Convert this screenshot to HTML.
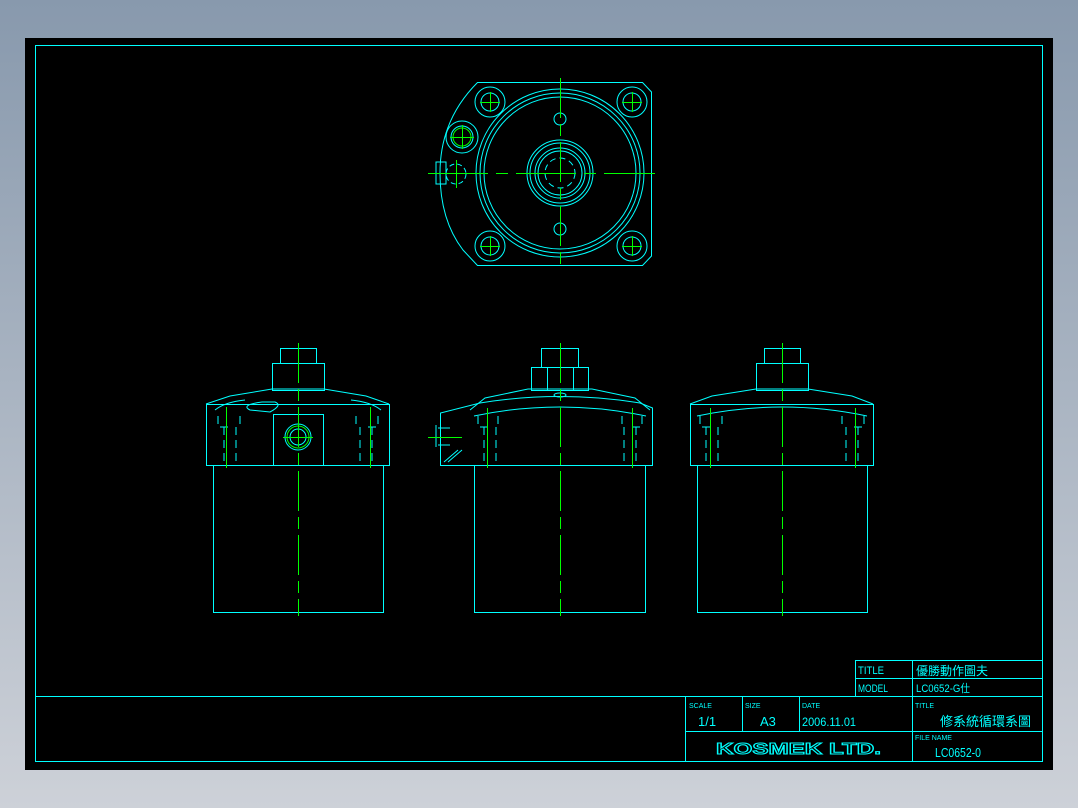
<!DOCTYPE html>
<html><head><meta charset="utf-8"><style>
html,body{margin:0;padding:0;width:1078px;height:808px;overflow:hidden;background:linear-gradient(#8899ad,#cdd1d8);}
svg{position:absolute;left:0;top:0}
text{font-family:"Liberation Sans","Noto Sans CJK TC",sans-serif;fill:#0ff}
</style></head><body>
<svg width="1078" height="808" viewBox="0 0 1078 808">
<rect x="25" y="38" width="1028" height="732" fill="#000"/>
<g fill="none" stroke="#0ff" stroke-width="1">
<rect x="35.5" y="45.5" width="1007" height="716"/>
<line x1="35" y1="696.5" x2="1043" y2="696.5"/>
<rect x="855.5" y="660.5" width="187" height="36"/>
<line x1="855" y1="678.5" x2="1043" y2="678.5"/>
<line x1="912.5" y1="660" x2="912.5" y2="696"/>
<line x1="685.5" y1="696" x2="685.5" y2="762"/>
<line x1="685" y1="731.5" x2="1043" y2="731.5"/>
<line x1="742.5" y1="696" x2="742.5" y2="731"/>
<line x1="799.5" y1="696" x2="799.5" y2="731"/>
<line x1="912.5" y1="696" x2="912.5" y2="762"/>

<!-- top view -->
<path d="M477.5 82.5 H642.5 L651.5 92 V256 L642.5 265.5 H477.5 L463 250 Q440 220 440 173 Q440 120 477.5 82.5Z"/>
<circle cx="560" cy="173" r="84"/><circle cx="560" cy="173" r="80"/><circle cx="560" cy="173" r="76"/>
<circle cx="560" cy="173" r="33"/><circle cx="560" cy="173" r="30"/><circle cx="560" cy="173" r="25"/><circle cx="560" cy="173" r="22"/><circle cx="560" cy="173" r="15" stroke-dasharray="6 4"/>
<circle cx="560" cy="119" r="6"/><circle cx="560" cy="229" r="6"/>
<circle cx="490" cy="102" r="15"/><circle cx="490" cy="102" r="9"/>
<circle cx="632" cy="102" r="15"/><circle cx="632" cy="102" r="9"/>
<circle cx="490" cy="246" r="15"/><circle cx="490" cy="246" r="9"/>
<circle cx="632" cy="246" r="15"/><circle cx="632" cy="246" r="9"/>
<circle cx="462" cy="137" r="16"/><circle cx="462" cy="137" r="11"/>
<rect x="436" y="162" width="10" height="22"/><circle cx="456" cy="174" r="10" stroke-dasharray="5 3"/>

<!-- left side view -->
<rect x="213.5" y="465.5" width="170" height="147"/>
<rect x="206.5" y="404.5" width="183" height="61"/>
<path d="M206 404 L230 396 L272 389 H324 L366 396 L389 404"/>
<rect x="272.5" y="363.5" width="52" height="27"/><rect x="280.5" y="348.5" width="36" height="15"/>
<line x1="273" y1="414.5" x2="323" y2="414.5"/>
<line x1="273.5" y1="414" x2="273.5" y2="465"/><line x1="323.5" y1="414" x2="323.5" y2="465"/>
<circle cx="298" cy="437" r="13"/><circle cx="298" cy="437" r="8"/>
<path d="M215 410 Q225 402 245 400 M381 410 Q371 402 351 400 M250 410 Q240 405 262 402 H275 Q283 405 270 412 Z"/>
<path d="M218 416 V427 H232 M240 416 V427 M378 416 V427 H364 M356 416 V427 M224 427 V465 M236 427 V465 M372 427 V465 M360 427 V465" stroke-dasharray="8 5"/>
<!-- middle view -->
<rect x="474.5" y="465.5" width="171" height="147"/>
<path d="M440.5 465.5 V413 L480 403 Q560 390 640 403 L652.5 408 V465.5 Z"/>
<path d="M470 410 L485 398 L528 389 H592 L635 398 L650 410"/>
<path d="M474 416 Q560 398 646 416"/>
<rect x="531.5" y="367.5" width="57" height="23"/><rect x="541.5" y="348.5" width="37" height="19"/>
<line x1="547.5" y1="367" x2="547.5" y2="390"/><line x1="573.5" y1="367" x2="573.5" y2="390"/>
<ellipse cx="560" cy="395" rx="6" ry="2"/>
<path d="M478 416 V427 H492 M498 416 V427 M642 416 V427 H628 M622 416 V427 M484 427 V465 M496 427 V465 M636 427 V465 M624 427 V465" stroke-dasharray="8 5"/>
<path d="M436 425 V447 M438 428 H450 M438 445 H450 M444 462 L458 450 M448 462 L462 450"/>
<!-- right view -->
<rect x="697.5" y="465.5" width="170" height="147"/>
<rect x="690.5" y="404.5" width="183" height="61"/>
<path d="M690 404 L712 396 L756 389 H808 L852 396 L873 404"/>
<path d="M697 416 Q782 398 867 416"/>
<rect x="756.5" y="363.5" width="52" height="27"/><rect x="764.5" y="348.5" width="36" height="15"/>
<path d="M700 416 V427 H714 M722 416 V427 M864 416 V427 H850 M842 416 V427 M706 427 V465 M718 427 V465 M858 427 V465 M846 427 V465" stroke-dasharray="8 5"/>
</g>
<g stroke="#0f0" stroke-width="1" fill="none">
<line x1="560.5" y1="78" x2="560.5" y2="268" stroke-dasharray="40 6 12 6"/>
<line x1="428" y1="173.5" x2="655" y2="173.5" stroke-dasharray="60 8 12 8"/>
<line x1="480" y1="102.5" x2="500" y2="102.5"/><line x1="490.5" y1="92" x2="490.5" y2="112"/>
<line x1="622" y1="102.5" x2="642" y2="102.5"/><line x1="632.5" y1="92" x2="632.5" y2="112"/>
<line x1="480" y1="246.5" x2="500" y2="246.5"/><line x1="490.5" y1="236" x2="490.5" y2="256"/>
<line x1="622" y1="246.5" x2="642" y2="246.5"/><line x1="632.5" y1="236" x2="632.5" y2="256"/>
<circle cx="462" cy="137" r="9"/><line x1="450" y1="137.5" x2="474" y2="137.5"/><line x1="462.5" y1="125" x2="462.5" y2="149"/>
<line x1="456.5" y1="160" x2="456.5" y2="188"/>
<line x1="298.5" y1="343" x2="298.5" y2="616" stroke-dasharray="40 6 12 6"/>
<line x1="560.5" y1="343" x2="560.5" y2="616" stroke-dasharray="40 6 12 6"/>
<line x1="782.5" y1="343" x2="782.5" y2="616" stroke-dasharray="40 6 12 6"/>
<line x1="226.5" y1="407" x2="226.5" y2="468"/><line x1="370.5" y1="407" x2="370.5" y2="468"/>
<line x1="487.5" y1="408" x2="487.5" y2="468"/><line x1="632.5" y1="408" x2="632.5" y2="468"/>
<line x1="710.5" y1="408" x2="710.5" y2="468"/><line x1="855.5" y1="408" x2="855.5" y2="468"/>
<circle cx="298" cy="437" r="11"/><line x1="283" y1="437.5" x2="313" y2="437.5"/>
<line x1="428" y1="437.5" x2="462" y2="437.5"/>
</g>
<g font-size="11">
<text x="858" y="674" textLength="26" lengthAdjust="spacingAndGlyphs">TITLE</text>
<text x="858" y="692" textLength="30" lengthAdjust="spacingAndGlyphs">MODEL</text>
<text x="916" y="675" font-size="12">優勝動作圖夫</text>
<text x="916" y="692" textLength="54" lengthAdjust="spacingAndGlyphs">LC0652-G仕</text>
<text x="689" y="708" font-size="7">SCALE</text>
<text x="745" y="708" font-size="7">SIZE</text>
<text x="802" y="708" font-size="7">DATE</text>
<text x="915" y="708" font-size="7">TITLE</text>
<text x="915" y="740" font-size="7">FILE NAME</text>
<text x="698" y="726" font-size="13">1/1</text>
<text x="760" y="726" font-size="13">A3</text>
<text x="802" y="726" font-size="12" textLength="54" lengthAdjust="spacingAndGlyphs">2006.11.01</text>
<text x="940" y="726" font-size="13">修系統循環系圖</text>
<text x="935" y="757" font-size="13" textLength="46" lengthAdjust="spacingAndGlyphs">LC0652-0</text>
<text x="716" y="754" font-size="16" font-weight="bold" fill="none" stroke="#0ff" stroke-width="1" textLength="165" lengthAdjust="spacingAndGlyphs" style="fill:none">KOSMEK LTD.</text>
</g>
</svg>
</body></html>
